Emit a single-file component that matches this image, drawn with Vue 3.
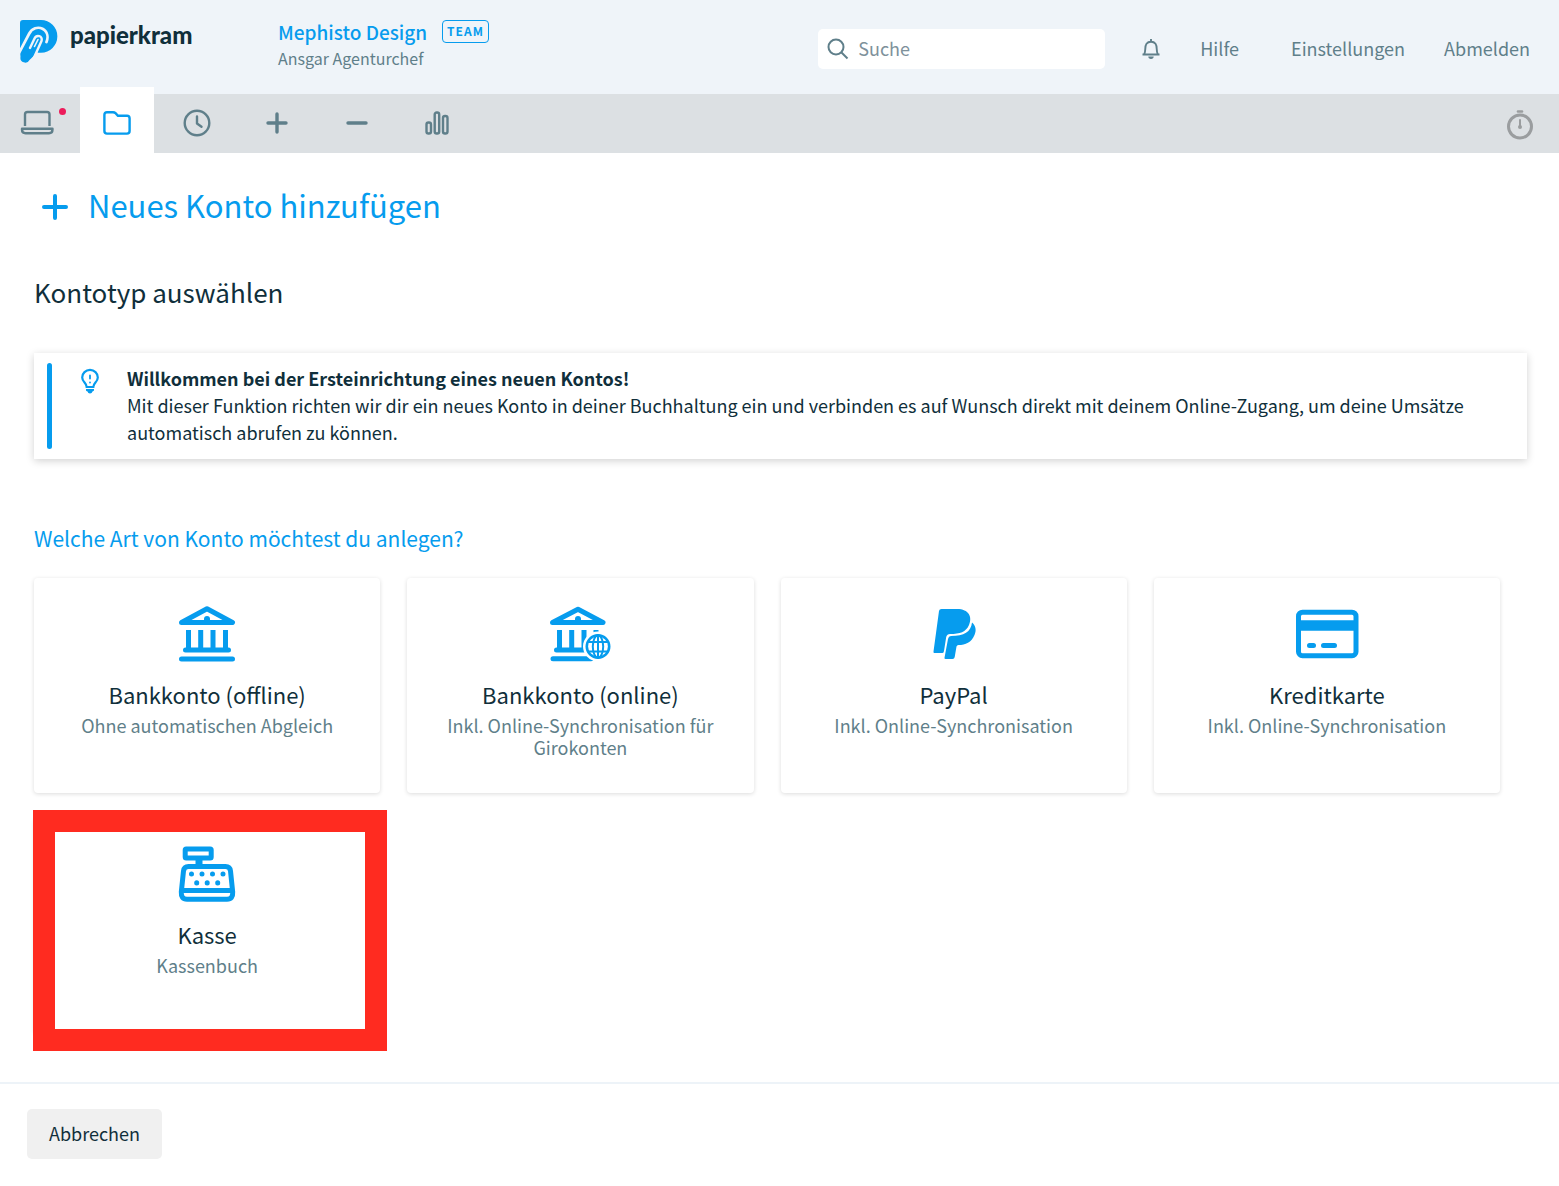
<script setup>
import { ref } from 'vue'

const query = ref('')

const tabs = [
  { id: 'dashboard', label: 'Übersicht', dot: true },
  { id: 'projects', label: 'Projekte', active: true },
  { id: 'time', label: 'Zeiterfassung' },
  { id: 'income', label: 'Einnahmen' },
  { id: 'expense', label: 'Ausgaben' },
  { id: 'reports', label: 'Auswertungen' },
]

const accountTypes = [
  { id: 'bank', title: 'Bankkonto (offline)', text: 'Ohne automatischen Abgleich' },
  { id: 'bank-online', title: 'Bankkonto (online)', text: 'Inkl. Online-Synchronisation für Girokonten' },
  { id: 'paypal', title: 'PayPal', text: 'Inkl. Online-Synchronisation' },
  { id: 'card', title: 'Kreditkarte', text: 'Inkl. Online-Synchronisation' },
  { id: 'cash', title: 'Kasse', text: 'Kassenbuch', marked: true },
]
</script>

<template>
  <div class="page">
    <header class="top">
      <a href="#" class="brand">
        <svg class="logo" width="38" height="43" viewBox="20 20 38 43" fill="none" stroke-linecap="round">
          <path d="M23 20H41A16.300 16.300 0 0 1 41 52.700H37L29.500 60A4.800 4.800 0 0 1 20.500 57L20 50V23Q20 20 23 20Z" fill="#069cee" />
          <path d="M18 55L29 34C32 28 38 26.500 42.500 28.800C47.500 31.500 48.500 37 46.500 42" stroke="#eff4f9" stroke-width="2.700" />
          <path d="M30 48L34.500 38.500C36.500 34.500 43 35.500 41.500 41L32 62" stroke="#eff4f9" stroke-width="2.400" />
          <path d="M34.500 46.500L38 39.500" stroke="#eff4f9" stroke-width="1.600" />
          <path d="M37.500 52L32 64H38V53Z" fill="#eff4f9" />
        </svg>
        <span>papierkram</span>
      </a>
      <div class="account">
        <div class="company"><a href="#">Mephisto Design</a><span class="badge">TEAM</span></div>
        <div class="user">Ansgar Agenturchef</div>
      </div>
      <label class="search">
        <svg width="22" height="22" viewBox="0 0 22 22" fill="none" stroke="#5f7f8a" stroke-width="2" aria-hidden="true">
          <circle cx="9" cy="9" r="7.500" /><path d="M14.500 14.500L20.500 20.500" />
        </svg>
        <input v-model="query" type="text" placeholder="Suche" aria-label="Suche" />
      </label>
      <nav class="links">
        <button class="bell" type="button" aria-label="Benachrichtigungen">
          <svg width="18" height="20" viewBox="0 0 18 20" fill="none" stroke="#5f7f8a" stroke-width="1.900">
            <path d="M.500 15.500H17.500M2.300 15C4 12 2.500 7.500 4.500 4.800C6.500 2 11.500 2 13.500 4.800C15.500 7.500 14 12 15.700 15" />
            <path d="M9 0V3" />
            <path d="M6.300 17.500H11.700A2.700 2.500 0 0 1 6.300 17.500Z" fill="#5f7f8a" stroke="none" />
          </svg>
        </button>
        <a href="#" class="help">Hilfe</a>
        <a href="#" class="settings">Einstellungen</a>
        <a href="#">Abmelden</a>
      </nav>
    </header>

    <nav class="tabs">
      <a v-for="tab in tabs" :key="tab.id" href="#" class="tab" :class="{ active: tab.active }" :aria-label="tab.label">
        <svg width="36" height="30" viewBox="0 0 36 30" fill="none" stroke="currentColor" stroke-width="2.400" stroke-linecap="round" stroke-linejoin="round">
          <g v-if="tab.id === 'dashboard'">
            <path d="M6 18V6.500Q6 4 8.500 4H28Q30.500 4 30.500 6.500V18" stroke-linecap="butt" />
            <path d="M3 20.800H33.500V21.500Q33.500 25.200 30 25.200H6.500Q3 25.200 3 21.500Z" />
          </g>
          <path v-else-if="tab.id === 'projects'" d="M8 4.200H14Q15.500 4.200 16.500 5.200L19 7.800H28Q30.600 7.800 30.600 10.400V23Q30.600 25.600 28 25.600H8Q5.400 25.600 5.400 23V6.800Q5.400 4.200 8 4.200Z" />
          <g v-else-if="tab.id === 'time'"><circle cx="18" cy="15" r="12.300" /><path d="M18 8.500V15.500L22.500 18.800" /></g>
          <path v-else-if="tab.id === 'income'" d="M9 15H27M18 6V24" stroke-width="3.400" />
          <path v-else-if="tab.id === 'expense'" d="M9 15H27" stroke-width="3.400" />
          <g v-else>
            <rect x="7.500" y="14.500" width="4.500" height="11" rx="2" />
            <rect x="15.700" y="4.500" width="4.500" height="21" rx="2" />
            <rect x="24" y="8" width="4.500" height="17.500" rx="2" />
          </g>
        </svg>
        <span v-if="tab.dot" class="dot"></span>
      </a>
      <button class="timer" type="button" aria-label="Stoppuhr">
        <svg width="28" height="30" viewBox="0 0 28 30" fill="none" stroke="#9a9d9f" stroke-linecap="round">
          <circle cx="14" cy="16.500" r="11.500" stroke-width="3" />
          <path d="M12 1.500H16" stroke-width="2.600" /><path d="M14 10V17" stroke-width="2" />
          <circle cx="14" cy="17" r="2" fill="#9a9d9f" stroke="none" />
        </svg>
      </button>
    </nav>

    <main>
      <h1>
        <svg width="28" height="28" viewBox="0 0 28 28" stroke="#069cee" stroke-width="4" stroke-linecap="round" aria-hidden="true"><path d="M3 14H25M14 3V25" /></svg>
        Neues Konto hinzufügen
      </h1>
      <h2>Kontotyp auswählen</h2>

      <section class="notice">
        <div class="stripe"></div>
        <svg width="18" height="25" viewBox="0 0 18 25" fill="none" stroke="#069cee" stroke-width="2.200" stroke-linecap="round" aria-hidden="true">
          <path d="M5.700 18C5.700 14 1.200 13 1.200 8.500A7.700 7.500 0 0 1 16.800 8.500C16.800 13 12.300 14 12.300 18Z" />
          <path d="M9 6.500V9.500M9 13.500V13.600" stroke-width="1.800" />
          <path d="M5 20H13V21.500Q12.500 22 11.500 22.500Q11 24.500 9 24.500Q7 24.500 6.500 22.500Q5 22 5 21.500Z" fill="#069cee" stroke="none" />
        </svg>
        <div class="copy">
          <strong>Willkommen bei der Ersteinrichtung eines neuen Kontos!</strong>
          <p>Mit dieser Funktion richten wir dir ein neues Konto in deiner Buchhaltung ein und verbinden es auf Wunsch direkt mit deinem Online-Zugang, um deine Umsätze automatisch abrufen zu können.</p>
        </div>
      </section>

      <h3>Welche Art von Konto möchtest du anlegen?</h3>
      <div class="cards">
        <button v-for="type in accountTypes" :key="type.id" type="button" class="card" :class="{ marked: type.marked }">
          <svg width="64" height="60" viewBox="0 0 64 60" fill="none" stroke="#069cee" stroke-width="5" stroke-linecap="round" stroke-linejoin="round" aria-hidden="true">
            <g v-if="type.id === 'bank'">
              <path d="M6.500 18.500L32 4.700L57.500 18.500Z" />
              <path d="M29 19V15A3 3 0 0 1 35 15V19Z" fill="#069cee" stroke="none" />
              <path d="M13.500 26V46M25.700 26V46M38 26V46M50.500 26V46" stroke-linecap="butt" />
              <path d="M10.500 46H53.500M6.500 55H57.500" />
            </g>
            <g v-else-if="type.id === 'bank-online'">
              <path d="M4.500 18.500L30 5.200L55 18.500Z" />
              <path d="M27 19V15A3 3 0 0 1 33 15V19Z" fill="#069cee" stroke="none" />
              <path d="M11.500 26V46M23.700 26V46M36 26V46M48 26V40" stroke-linecap="butt" />
              <path d="M8.500 46H42M5 54.700H43" />
              <circle cx="50" cy="42.500" r="15" fill="#fff" stroke="none" />
              <g stroke-width="2">
                <circle cx="50" cy="42.500" r="11.200" stroke-width="2.600" />
                <ellipse cx="50" cy="42.500" rx="5.200" ry="11.200" />
                <path d="M50 31.500V53.500M40.500 38H59.500M40.500 47.500H59.500" />
              </g>
            </g>
            <g v-else-if="type.id === 'paypal'" fill="#069cee" stroke="none" transform="translate(0 1)">
              <path d="M18.500 4.500Q18.700 4 19.500 4H35C47 4 50.500 12 47 20C44 27 38 29 28 29Q25 29 24.200 32L22 46Q21.800 48 20.500 48H12.500Q11.200 48 11.500 46.500L17 6Q17.300 4 19.500 4Z" />
              <path d="M50 17.500C54 21 54.500 25.500 52.500 30C49.500 37.500 43.500 40 36.500 40Q34.800 40 34.500 41.500L32.700 52Q32.400 54 30.500 54H23.500Q22.300 54 22.500 52.700L26 34Q26.500 31.200 29 31C42 31 49 27 50 17.500Z" />
            </g>
            <g v-else-if="type.id === 'card'">
              <rect x="3.500" y="8.200" width="57.500" height="43.500" rx="4" />
              <path d="M3 21.500H61" stroke-width="10.500" stroke-linecap="butt" /><path d="M14.500 41.500H18.500M28.500 41.500H39.500" />
            </g>
            <g v-else>
              <rect x="10.200" y="5" width="26" height="9" rx="1" />
              <path d="M24 16V22" stroke-width="7" stroke-linecap="butt" />
              <path d="M13.500 22.500H50.500Q55 22.500 55.500 27L57.700 48Q58.200 55.200 52 55.200H12Q5.800 55.200 6.300 48L8.500 27Q9 22.500 13.500 22.500Z" />
              <path d="M7 46.500H57" stroke-linecap="butt" />
              <path d="M16.500 30V30.100M27 30V30.100M37.500 30V30.100M48 30V30.100M21.700 38.800V38.900M32.200 38.800V38.900M42.700 38.800V38.900" />
            </g>
          </svg>
          <span class="title">{{ type.title }}</span>
          <span class="text">{{ type.text }}</span>
          <span v-if="type.marked" class="marker"></span>
        </button>
      </div>
    </main>

    <footer><button type="button">Abbrechen</button></footer>
  </div>
</template>

<style>
body { margin: 0; background: #fff; }
</style>

<style scoped>
* { box-sizing: border-box; }
.page { font-family: "Noto Sans CJK SC", "Noto Sans", sans-serif; color: #102f3b; font-size: 18px; }
a { color: inherit; text-decoration: none; }
button { font: inherit; color: inherit; border: 0; padding: 0; background: none; cursor: pointer; }
h1, h2, h3, p { margin: 0; font-weight: 400; }
svg { display: block; flex: none; overflow: visible; }
.logo { overflow: hidden; }

.top { height: 94px; display: flex; background: #eff4f9; padding-right: 29px; }
.brand { width: 278px; padding: 20px; display: flex; gap: 12px; font: 900 24px/30px Lato, sans-serif; }
.account { flex: 1; padding-top: 19px; }
.company { display: flex; align-items: center; gap: 15px; height: 24px; font-size: 19px; font-weight: 500; color: #069cee; }
.badge { height: 23px; padding: 0 4px; border: 1px solid #069cee; border-radius: 4px; font-size: 12px; line-height: 20px; font-weight: 700; letter-spacing: 1px; }
.user { margin-top: 3px; font-size: 16px; line-height: 24px; color: #5f7f8a; }
.search { width: 287px; height: 40px; margin-top: 29px; padding-left: 9px; display: flex; align-items: center; gap: 9px; background: #fff; border-radius: 5px; }
.search input { flex: 1; min-width: 0; height: 40px; border: 0; padding: 0 0 2px; outline: 0; background: none; font: inherit; color: inherit; }
.search input::placeholder { color: #7e919b; opacity: 1; }
.links { display: flex; align-items: center; height: 38px; margin-top: 29px; color: #5f7f8a; }
.bell { margin: 2px 40px 0 37px; }
.help { margin-right: 52px; }
.settings { margin-right: 39px; }

.tabs { height: 59px; display: flex; align-items: flex-end; gap: 6px; padding-right: 25px; background: #dce0e3; color: #5f7f8a; }
.tab { position: relative; width: 74px; height: 59px; padding-bottom: 2px; display: flex; justify-content: center; align-items: center; }
.tab.active { height: 66px; padding-top: 7px; background: #fff; color: #069cee; }
.dot { position: absolute; right: 8px; top: 14px; width: 7px; height: 7px; border-radius: 50%; background: #ec1c5b; }
.timer { margin: 0 0 13px auto; }

main { padding: 27px 32px 49px 34px; }
h1 { display: flex; align-items: center; gap: 19px; padding: 0 0 4px 7px; font-size: 31px; line-height: 50px; color: #069cee; }
h1 svg { margin-top: 4px; }
h2 { margin-top: 40px; font-size: 26px; line-height: 36px; }
.notice { display: flex; margin-top: 43px; padding: 10px 48px 10px 13px; box-shadow: 0 2px 8px rgba(0, 0, 0, .18); }
.stripe { flex: none; width: 5px; margin-right: 29px; border-radius: 3px; background: #069cee; }
.notice svg { margin: 6px 28px 0 0; }
.copy { line-height: 27px; padding: 2px 0 3px; }
.copy strong { display: block; }
h3 { margin-top: 62px; font-size: 21px; line-height: 34px; color: #069cee; }
.cards { display: grid; grid-template-columns: repeat(4, 1fr); gap: 25px 27px; margin: 23px 27px 0 0; }
.card { position: relative; min-height: 215px; padding: 26px 32px; display: flex; flex-direction: column; align-items: center; border-radius: 4px; background: #fff; box-shadow: 0 1px 4px rgba(0, 0, 0, .14); }
.title { margin-top: 13px; font-size: 22px; line-height: 34px; }
.text { margin-top: 3px; line-height: 22px; color: #5f7f8a; }
.marker { position: absolute; inset: -8px -7px -18px -1px; border: 22px solid #ff2b20; }

footer { padding: 25px 27px 27px; border-top: 2px solid #edf3f8; }
footer button { width: 135px; height: 50px; padding-bottom: 2px; border-radius: 5px; background: #f0f0f0; }
</style>
